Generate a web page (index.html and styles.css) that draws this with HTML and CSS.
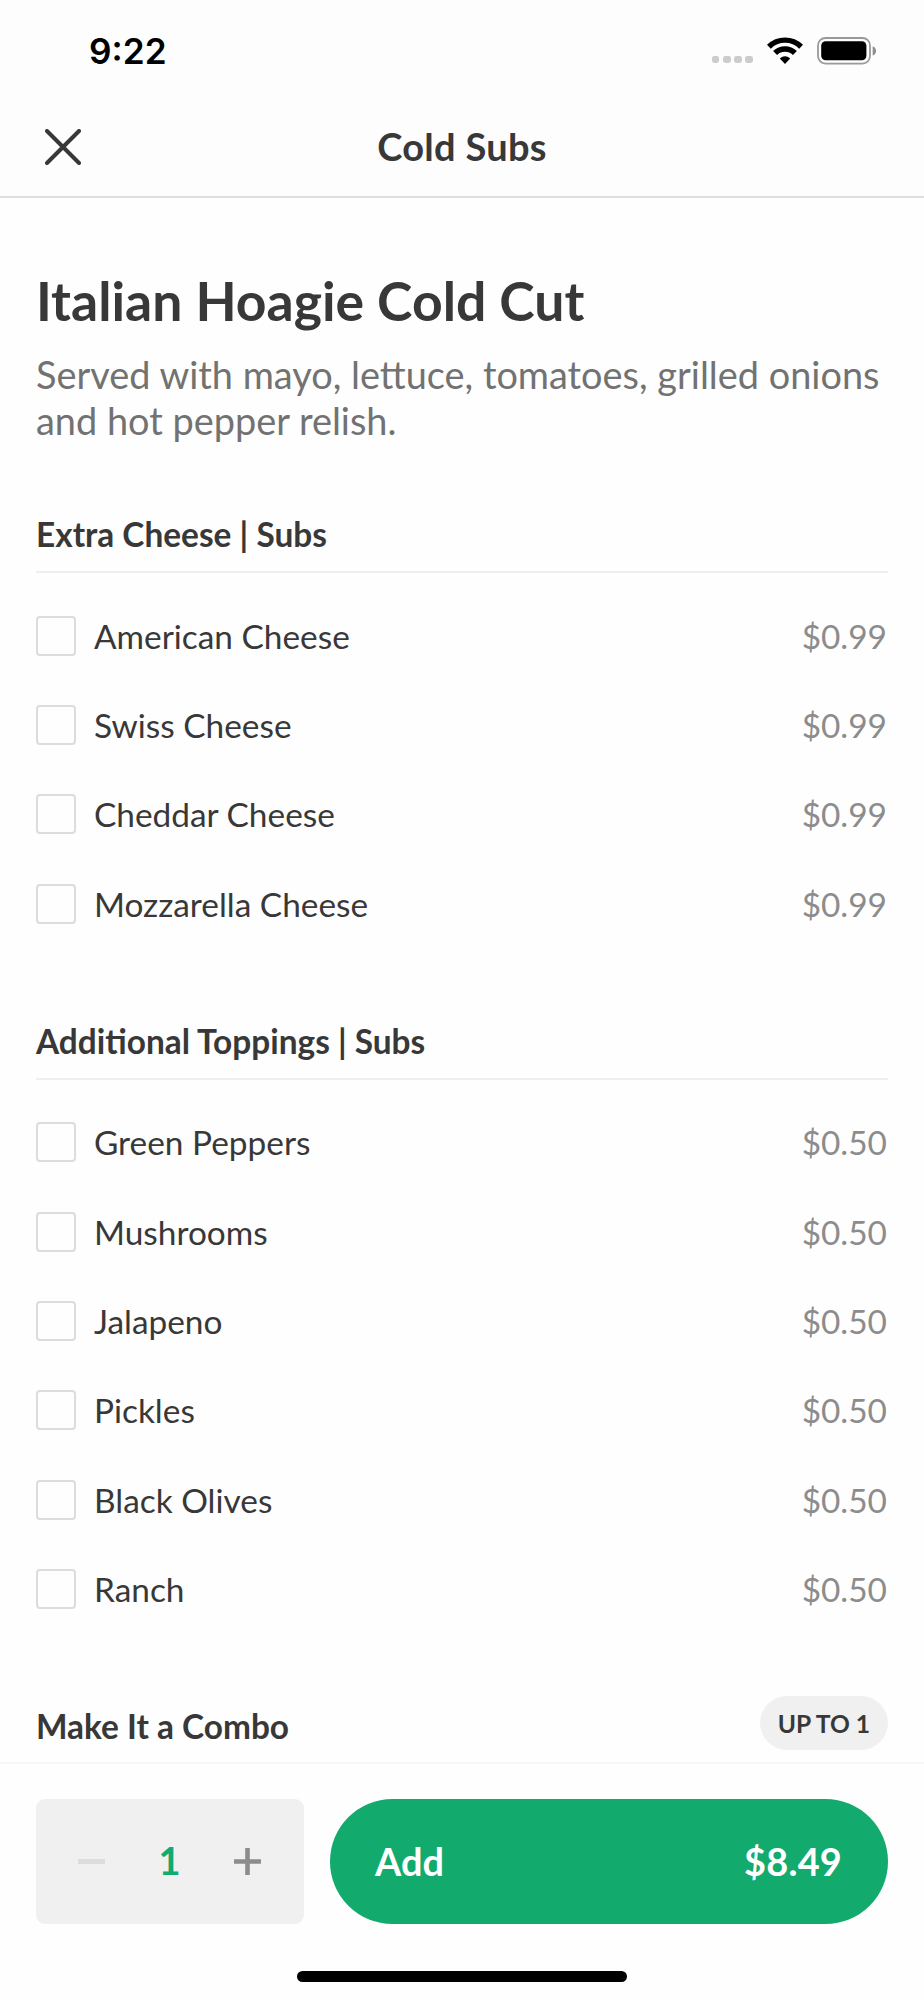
FILE: index.html
```html
<!DOCTYPE html>
<html lang="en">
<head>
    <meta charset="UTF-8">
    <meta name="viewport" content="width=device-width, initial-scale=1.0">
    <title>Italian Hoagie Cold Cut</title>
    <link rel="stylesheet" href="styles.css">
</head>
<body>
    <header class="header">
        <div class="status-bar">
            <span class="time">9:22</span>
            <div class="status-icons">
                <div class="signal"><i></i><i></i><i></i><i></i></div>
                <svg class="wifi" width="36" height="28" viewBox="0 0 36 28">
                    <path d="M1.9 9.7 A23 23 0 0 1 34.1 9.7" fill="none" stroke="#000" stroke-width="5.4"/>
                    <path d="M8.1 16.1 A14 14 0 0 1 27.9 16.1" fill="none" stroke="#000" stroke-width="5.6"/>
                    <path d="M12.8 21.6 Q18 17 23.2 21.6 L18 27 Z" fill="#000"/>
                </svg>
                <svg class="battery" width="60" height="28" viewBox="0 0 60 28">
                    <rect x="1" y="1" width="52" height="25.6" rx="7.5" fill="none" stroke="#999" stroke-width="1.8"/>
                    <rect x="4.2" y="4.3" width="45.2" height="19" rx="4.5" fill="#000"/>
                    <path d="M55.7 9.2 Q59 10.6 59 13.9 Q59 17.2 55.7 18.6 Z" fill="#8e8e8e"/>
                </svg>
            </div>
        </div>
        <div class="nav-bar">
            <button class="close" aria-label="Close">
                <svg width="36" height="36" viewBox="0 0 36 36">
                    <path d="M2 2 L34 34 M34 2 L2 34" stroke="#383838" stroke-width="4" stroke-linecap="round"/>
                </svg>
            </button>
            <span class="nav-title">Cold Subs</span>
        </div>
    </header>

    <main class="content">
        <h1>Italian Hoagie Cold Cut</h1>
        <p class="description">Served with mayo, lettuce, tomatoes, grilled onions and hot pepper relish.</p>

        <section class="group">
            <div class="group-head"><h2>Extra Cheese | Subs</h2></div>
            <ul class="options">
                <li><span class="checkbox"></span><span class="name">American Cheese</span><span class="price">$0.99</span></li>
                <li><span class="checkbox"></span><span class="name">Swiss Cheese</span><span class="price">$0.99</span></li>
                <li><span class="checkbox"></span><span class="name">Cheddar Cheese</span><span class="price">$0.99</span></li>
                <li><span class="checkbox"></span><span class="name">Mozzarella Cheese</span><span class="price">$0.99</span></li>
            </ul>
        </section>

        <section class="group">
            <div class="group-head"><h2>Additional Toppings | Subs</h2></div>
            <ul class="options">
                <li><span class="checkbox"></span><span class="name">Green Peppers</span><span class="price">$0.50</span></li>
                <li><span class="checkbox"></span><span class="name">Mushrooms</span><span class="price">$0.50</span></li>
                <li><span class="checkbox"></span><span class="name">Jalapeno</span><span class="price">$0.50</span></li>
                <li><span class="checkbox"></span><span class="name">Pickles</span><span class="price">$0.50</span></li>
                <li><span class="checkbox"></span><span class="name">Black Olives</span><span class="price">$0.50</span></li>
                <li><span class="checkbox"></span><span class="name">Ranch</span><span class="price">$0.50</span></li>
            </ul>
        </section>

        <section class="group">
            <div class="group-head"><h2>Make It a Combo</h2><span class="badge">UP TO 1</span></div>
        </section>
    </main>

    <footer class="footer">
        <div class="actions">
            <div class="stepper">
                <button class="minus" aria-label="Remove one"><svg width="27" height="27" viewBox="0 0 27 27"><path d="M0 13.5 H27" stroke="#dcdcdc" stroke-width="5"/></svg></button>
                <span class="quantity">1</span>
                <button class="plus" aria-label="Add one"><svg width="27" height="27" viewBox="0 0 27 27"><path d="M0 13.5 H27 M13.5 0 V27" stroke="#8c8c8c" stroke-width="4.6"/></svg></button>
            </div>
            <button class="add"><span>Add</span><span class="total">$8.49</span></button>
        </div>
        <div class="home-indicator"></div>
    </footer>
</body>
</html>
```
FILE: styles.css
```css
* {
    box-sizing: border-box;
}
body {
    margin: 0;
    height: 2000px;
    display: flex;
    flex-direction: column;
    overflow: hidden;
    font-family: Lato, "Liberation Sans", sans-serif;
    background-color: #fefefe;
    color: #383838;
}
h1, h2, p, ul {
    margin: 0;
    padding: 0;
}
button {
    border: none;
    padding: 0;
    background: none;
    font-family: inherit;
    color: inherit;
    cursor: pointer;
}
svg {
    display: block;
}

/* Header */
.header {
    flex: none;
    height: 198px;
    background-color: #fdfdfd;
    border-bottom: 2px solid #dedede;
}
.status-bar {
    height: 101px;
    padding: 0 47px 0 89px;
    display: flex;
    justify-content: space-between;
    align-items: center;
}
.time {
    font-family: Inter, sans-serif;
    font-size: 35.2px;
    font-weight: 600;
    line-height: 40px;
    color: #000;
}
.status-icons {
    display: flex;
    align-items: flex-end;
}
.signal {
    display: flex;
    gap: 3.4px;
    margin: 0 14px 1.5px 0;
}
.signal i {
    width: 7.8px;
    height: 7px;
    border-radius: 2.4px;
    background-color: #ccc;
}
.battery {
    margin-left: 14px;
}
.nav-bar {
    height: 92px;
    padding: 0 44.5px;
    display: grid;
    grid-template-columns: 36px 1fr 36px;
    align-items: center;
}
.nav-title {
    padding-bottom: 2px;
    font-size: 38px;
    font-weight: 700;
    line-height: 46px;
    letter-spacing: 0.3px;
    text-align: center;
}

/* Item */
.content {
    flex: 1;
    min-height: 0;
    overflow: hidden;
    padding: 70px 36px 0;
}
h1 {
    font-size: 53.5px;
    font-weight: 700;
    line-height: 64px;
}
.description {
    margin: 20px 0 6px;
    font-size: 37.9px;
    line-height: 45.6px;
    color: #727272;
}

/* Options */
.group-head {
    height: 124px;
    padding-bottom: 17px;
    border-bottom: 2px solid #efefef;
    display: flex;
    justify-content: space-between;
    align-items: flex-end;
}
h2 {
    font-size: 33.4px;
    font-weight: 700;
    line-height: 40px;
}
.options {
    list-style: none;
    padding: 18px 0 7.4px;
}
.options li {
    height: 89.3px;
    display: flex;
    align-items: center;
}
.checkbox {
    width: 40px;
    height: 40px;
    margin-right: 18px;
    border: 2px solid #dcdcdc;
    border-radius: 4px;
}
.name {
    flex: 1;
    font-size: 33.4px;
}
.price {
    margin-right: 1px;
    font-size: 33.4px;
    color: #8c8c8c;
}
.badge {
    height: 54px;
    margin-bottom: -4px;
    padding: 0 18px;
    border-radius: 27px;
    background-color: #f0f0f0;
    font-size: 24.6px;
    font-weight: 700;
    line-height: 56px;
}

/* Footer */
.footer {
    flex: none;
    height: 238px;
    border-top: 2px solid #f7f7f7;
    padding: 35px 36px 0;
}
.actions {
    display: flex;
    gap: 26px;
}
.stepper {
    width: 268px;
    height: 125px;
    padding: 0 43px 0 42px;
    border-radius: 9px;
    background-color: #f0f0f0;
    display: flex;
    justify-content: space-between;
    align-items: center;
}
.quantity {
    padding-bottom: 3px;
    font-size: 38px;
    font-weight: 700;
    color: #13aa6d;
}
.add {
    flex: 1;
    height: 125px;
    padding: 0 46px 0 45px;
    border-radius: 63px;
    background-color: #13aa6d;
    color: #fff;
    font-size: 37.9px;
    font-weight: 700;
    display: flex;
    justify-content: space-between;
    align-items: center;
}
.total {
    letter-spacing: 0.2px;
}
.home-indicator {
    width: 330px;
    height: 11px;
    margin: 47px auto 0;
    border-radius: 6px;
    background-color: #000;
}
```
